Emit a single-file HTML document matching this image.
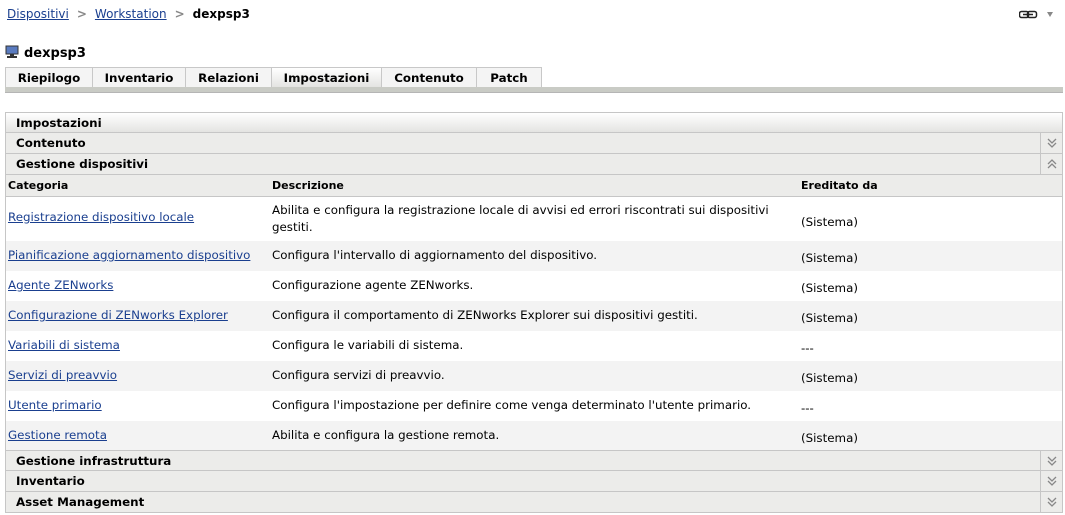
<!DOCTYPE html>
<html><head><meta charset="utf-8"><style>
*{margin:0;padding:0;box-sizing:border-box}
body{width:1065px;height:515px;background:#fff;font-family:"DejaVu Sans","Liberation Sans",sans-serif;font-size:11.85px;color:#000;position:relative;overflow:hidden}
.abs{position:absolute}
a{color:#1a3f8f;text-decoration:underline}
.crumb{left:7px;top:7px;font-size:12px}
.crumb .sep{color:#888;margin:0 8px;font-weight:bold}
.title{left:24px;top:46px;font-weight:bold;font-size:13px}
.tabs{left:5px;top:67px;height:21px;display:flex}
.tab{height:21px;border:1px solid #c8c8c8;border-bottom:none;background:#f4f4f4;font-weight:bold;text-align:center;line-height:20px;margin-right:-1px}
.tab.act{background:linear-gradient(#fff,#e2e2e0)}
.bar{left:5px;top:87px;width:1058px;height:6px;background:#c9cbc5;border-bottom:1px solid #b5b5b5}
.panel{left:5px;top:112px;width:1058px;height:401px;border:1px solid #c6c6c6}
.hdr{position:absolute;left:0;width:1056px;background:#ececea;border-bottom:1px solid #c6c6c6;font-weight:bold;padding-left:10px;line-height:20px}
.hdr .ic{position:absolute;right:0;top:0;width:22px;height:100%;border-left:1px solid #c6c6c6}
.hdr .ic svg{position:absolute;left:6px;top:5px}
.row{position:absolute;left:0;width:1056px}
.row div{position:absolute}
.g{background:#f3f3f3}
</style></head><body>
<div class="abs crumb"><a>Dispositivi</a><span class="sep">&gt;</span><a>Workstation</a><span class="sep">&gt;</span><b>dexpsp3</b></div>
<svg class="abs" style="left:1019px;top:10px" width="36" height="9"><rect x="0.5" y="1.5" width="9" height="6" rx="2" fill="none" stroke="#222" stroke-width="1.5"/><rect x="8.5" y="1.5" width="9" height="6" rx="2" fill="none" stroke="#222" stroke-width="1.5"/><path d="M4 4.5h10" stroke="#222" stroke-width="1.5"/><path d="M28 2h6l-3 5z" fill="#888"/></svg>
<svg class="abs" style="left:5px;top:45px" width="14" height="14"><rect x="1" y="1" width="12" height="8" fill="#5a7bbf" stroke="#333"/><rect x="5" y="9" width="4" height="2" fill="#333"/><rect x="2" y="11" width="10" height="2" fill="#333"/></svg>
<div class="abs title">dexpsp3</div>
<div class="abs tabs">
<div class="tab" style="width:88px">Riepilogo</div>
<div class="tab" style="width:94px">Inventario</div>
<div class="tab" style="width:87px">Relazioni</div>
<div class="tab act" style="width:111px">Impostazioni</div>
<div class="tab" style="width:96px">Contenuto</div>
<div class="tab" style="width:66px">Patch</div>
</div>
<div class="abs bar"></div>
<div class="abs panel">
<div class="hdr" style="top:0;height:20px;background:linear-gradient(#fff,#e4e4e2)">Impostazioni</div>
<div class="hdr" style="top:20px;height:21px">Contenuto<span class="ic"><svg width="10" height="10"><path d="M1 1l4 4 4-4M1 5l4 4 4-4" fill="none" stroke="#888" stroke-width="1.3"/></svg></span></div>
<div class="hdr" style="top:41px;height:21px">Gestione dispositivi<span class="ic"><svg width="10" height="10"><path d="M1 5l4-4 4 4M1 9l4-4 4 4" fill="none" stroke="#888" stroke-width="1.3"/></svg></span></div>
<div class="hdr" style="top:62px;height:22px;padding-left:0;font-size:11px;line-height:22px"><span style="position:absolute;left:2px">Categoria</span><span style="position:absolute;left:266px">Descrizione</span><span style="position:absolute;left:795px">Ereditato da</span></div>
<div class="row" style="top:84px;height:44px"><div style="left:2px;top:13px"><a>Registrazione dispositivo locale</a></div><div style="left:266px;top:5px;line-height:17px">Abilita e configura la registrazione locale di avvisi ed errori riscontrati sui dispositivi<br>gestiti.</div><div style="left:795px;top:18px">(Sistema)</div></div>
<div class="row g" style="top:128px;height:30px"><div style="left:2px;top:7px"><a>Pianificazione aggiornamento dispositivo</a></div><div style="left:266px;top:7px">Configura l'intervallo di aggiornamento del dispositivo.</div><div style="left:795px;top:10px">(Sistema)</div></div>
<div class="row" style="top:158px;height:30px"><div style="left:2px;top:7px"><a>Agente ZENworks</a></div><div style="left:266px;top:7px">Configurazione agente ZENworks.</div><div style="left:795px;top:10px">(Sistema)</div></div>
<div class="row g" style="top:188px;height:30px"><div style="left:2px;top:7px"><a>Configurazione di ZENworks Explorer</a></div><div style="left:266px;top:7px">Configura il comportamento di ZENworks Explorer sui dispositivi gestiti.</div><div style="left:795px;top:10px">(Sistema)</div></div>
<div class="row" style="top:218px;height:30px"><div style="left:2px;top:7px"><a>Variabili di sistema</a></div><div style="left:266px;top:7px">Configura le variabili di sistema.</div><div style="left:795px;top:10px">---</div></div>
<div class="row g" style="top:248px;height:30px"><div style="left:2px;top:7px"><a>Servizi di preavvio</a></div><div style="left:266px;top:7px">Configura servizi di preavvio.</div><div style="left:795px;top:10px">(Sistema)</div></div>
<div class="row" style="top:278px;height:30px"><div style="left:2px;top:7px"><a>Utente primario</a></div><div style="left:266px;top:7px">Configura l'impostazione per definire come venga determinato l'utente primario.</div><div style="left:795px;top:10px">---</div></div>
<div class="row g" style="top:308px;height:30px"><div style="left:2px;top:7px"><a>Gestione remota</a></div><div style="left:266px;top:7px">Abilita e configura la gestione remota.</div><div style="left:795px;top:10px">(Sistema)</div></div>
<div class="hdr" style="top:337px;height:21px;border-top:1px solid #c6c6c6">Gestione infrastruttura<span class="ic"><svg width="10" height="10"><path d="M1 1l4 4 4-4M1 5l4 4 4-4" fill="none" stroke="#888" stroke-width="1.3"/></svg></span></div>
<div class="hdr" style="top:358px;height:21px">Inventario<span class="ic"><svg width="10" height="10"><path d="M1 1l4 4 4-4M1 5l4 4 4-4" fill="none" stroke="#888" stroke-width="1.3"/></svg></span></div>
<div class="hdr" style="top:379px;height:20px;border-bottom:none">Asset Management<span class="ic"><svg width="10" height="10"><path d="M1 1l4 4 4-4M1 5l4 4 4-4" fill="none" stroke="#888" stroke-width="1.3"/></svg></span></div>
</div>
</body></html>
